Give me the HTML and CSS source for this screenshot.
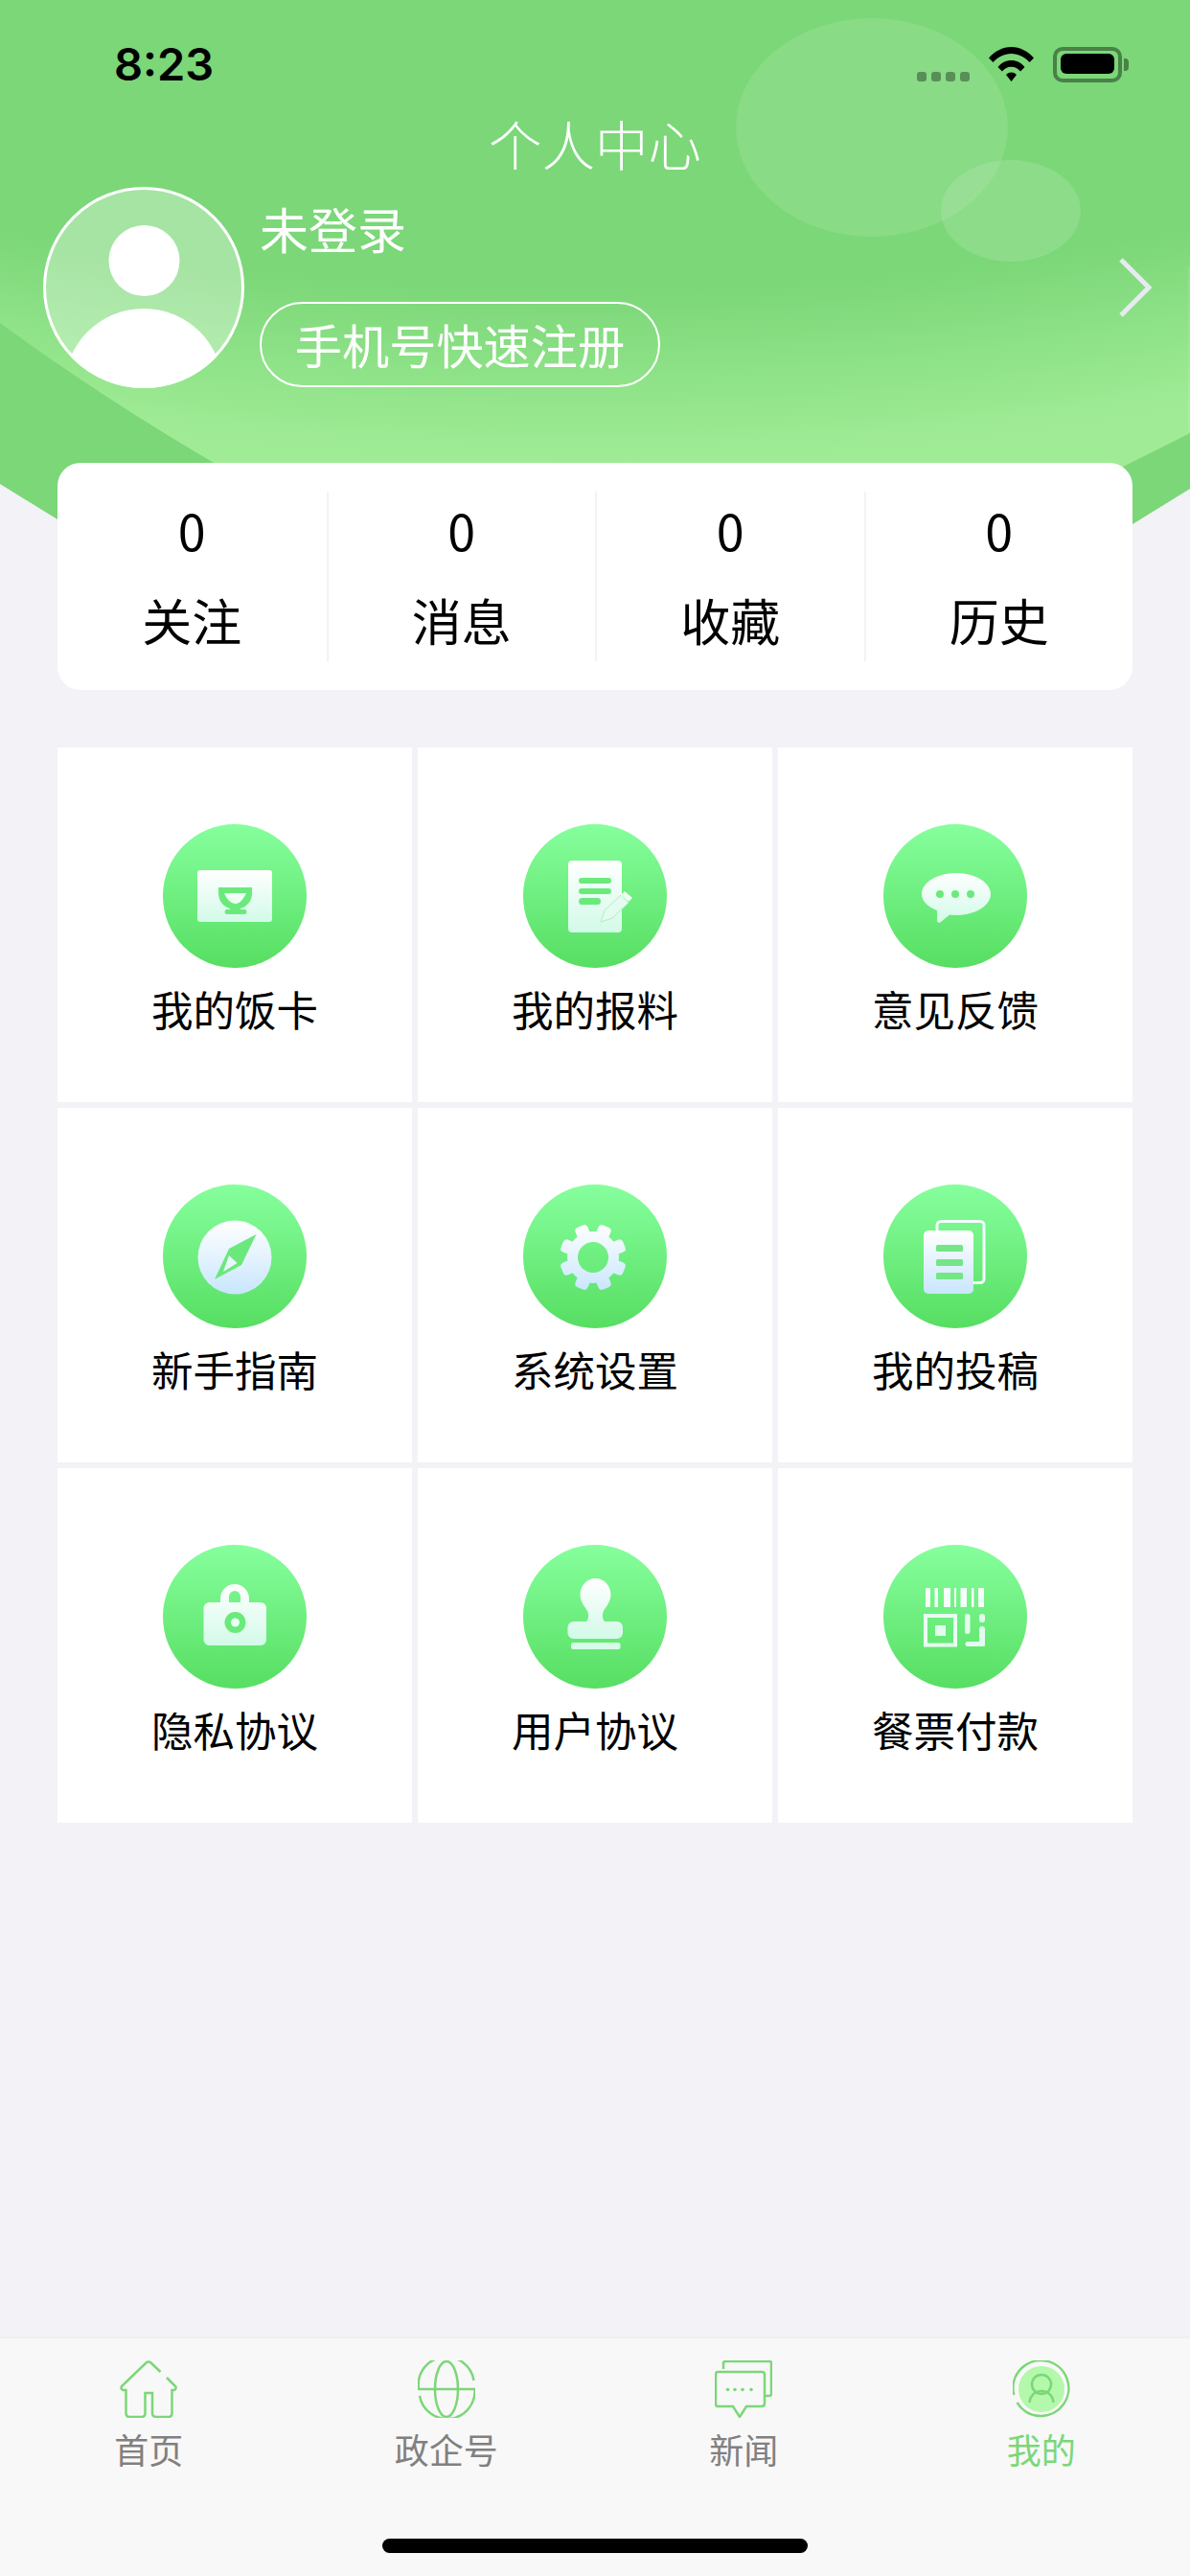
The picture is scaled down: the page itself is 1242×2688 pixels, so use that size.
FILE: index.html
```html
<!DOCTYPE html>
<html lang="zh-CN">
<head>
<meta charset="utf-8">
<title>个人中心</title>
<link rel="stylesheet" href="styles.css">
</head>
<body>
<div class="page">
  <svg class="defs" width="0" height="0" aria-hidden="true">
    <defs>
      <linearGradient id="disc" x1="0" y1="0" x2="0" y2="1"><stop offset="0" stop-color="#86FF9D"/><stop offset="1" stop-color="#57DE62"/></linearGradient>
      <linearGradient id="mint" x1="0" y1="0" x2="0" y2="1"><stop offset="0" stop-color="#FFFFFF"/><stop offset="1" stop-color="#D2FAE8"/></linearGradient>
      <linearGradient id="sky" x1="0" y1="0" x2="0" y2="1"><stop offset="0" stop-color="#FFFFFF"/><stop offset="1" stop-color="#C8E6FD"/></linearGradient>
    </defs>
  </svg>

  <svg class="hero-bg" viewBox="0 0 1242 560" width="1242" height="560" aria-hidden="true">
    <defs>
      <radialGradient id="glow" gradientUnits="userSpaceOnUse" cx="621" cy="-2800" r="3283">
        <stop offset="0.944" stop-color="#A0EC96" stop-opacity="0"/>
        <stop offset="1" stop-color="#A0EC96"/>
      </radialGradient>
    </defs>
    <path fill="#7BD778" d="M0 0H1242V510L1182 547Q621 800 60 542L0 505Z"/>
    <path fill="url(#glow)" d="M0 0H1242V452L1172 487H230Q105 414 0 337Z"/>
    <ellipse cx="910" cy="133" rx="142" ry="114" fill="#fff" fill-opacity=".11"/>
    <ellipse cx="1055" cy="220" rx="73" ry="53" fill="#fff" fill-opacity=".13"/>
    <rect x="1240" y="278" width="2" height="172" fill="#fff" fill-opacity=".1"/>
  </svg>

  <header class="hero">
    <div class="statusbar">
      <span class="time">8:23</span>
      <div class="status-icons">
        <span class="signal"><i></i><i></i><i></i><i></i></span>
        <svg class="wifi" viewBox="0 0 47 36" width="47" height="36">
          <path d="M0 11.5C6 4.5 14.5 0 23.5 0S41 4.500 47 11.500L42.500 16C37.500 10.500 31 7 23.500 7S9.500 10.500 4.500 16Z"/>
          <path d="M9.500 21C13 16.500 18 14 23.500 14S34 16.500 37.500 21L33 25.500C30.500 22.500 27.500 20.800 23.500 20.800S16.500 22.500 14 25.500Z"/>
          <path d="M18 29C19.500 27.300 21.500 26.500 23.500 26.500S27.500 27.300 29 29L23.500 36Z"/>
        </svg>
        <span class="battery"><span class="battery-fill"></span></span>
      </div>
    </div>
    <h1 class="title">个人中心</h1>
    <div class="profile">
      <svg class="avatar" viewBox="0 0 210 210" width="210" height="210">
        <defs><clipPath id="avatar-clip"><circle cx="105" cy="105" r="105"/></clipPath></defs>
        <circle cx="105" cy="105" r="103.500" fill="#fff" fill-opacity=".32" stroke="#fff" stroke-width="3"/>
        <circle cx="105.500" cy="77" r="37" fill="#fff"/>
        <circle cx="105" cy="210" r="83" fill="#fff" clip-path="url(#avatar-clip)"/>
      </svg>
      <div class="profile-text">
        <div class="name">未登录</div>
        <div class="register">手机号快速注册</div>
      </div>
      <svg class="chevron" viewBox="0 0 36 62" width="36" height="62"><path d="M4 2L33 31L4 60" fill="none" stroke="#E6EBF0" stroke-width="5"/></svg>
    </div>
  </header>

  <section class="stats">
    <div class="stat"><span class="stat-num">0</span><span class="stat-label">关注</span></div>
    <div class="stat"><span class="stat-num">0</span><span class="stat-label">消息</span></div>
    <div class="stat"><span class="stat-num">0</span><span class="stat-label">收藏</span></div>
    <div class="stat"><span class="stat-num">0</span><span class="stat-label">历史</span></div>
  </section>

  <section class="menu">
    <div class="cell">
      <svg class="disc" viewBox="0 0 150 150" width="150" height="150">
        <circle cx="75" cy="75" r="75" fill="url(#disc)"/>
        <rect x="36" y="48" width="78" height="54" rx="3" fill="url(#mint)"/>
        <path fill="#6BEA7C" d="M58 66H93V72C93 80 88 86 81 88V89H85A2.500 2.500 0 0 1 85 94H67A2.500 2.500 0 0 1 67 89H70V88C63 86 58 80 58 72Z"/>
        <path fill="#EFFFF6" d="M64 72H87Q82 83 75.500 83Q69 83 64 72Z"/>
      </svg>
      <span class="cell-label">我的饭卡</span>
    </div>
    <div class="cell">
      <svg class="disc" viewBox="0 0 150 150" width="150" height="150">
        <circle cx="75" cy="75" r="75" fill="url(#disc)"/>
        <rect x="47" y="38" width="56" height="75" rx="4" fill="url(#mint)"/>
        <rect x="58" y="56" width="34" height="6" rx="3" fill="#6BEA7C"/>
        <rect x="58" y="67" width="34" height="6" rx="3" fill="#6BEA7C"/>
        <rect x="58" y="77" width="23" height="7" rx="3.500" fill="#6BEA7C"/>
        <path fill="#E4FCEF" stroke="#A9F2BE" stroke-width="1" d="M81 102L85 90L102 74L110 82L93 98Z"/>
        <path fill="#F0FFF6" d="M106 70L114 77L110 81L102 74Z"/>
      </svg>
      <span class="cell-label">我的报料</span>
    </div>
    <div class="cell">
      <svg class="disc" viewBox="0 0 150 150" width="150" height="150">
        <circle cx="75" cy="75" r="75" fill="url(#disc)"/>
        <path fill="url(#mint)" d="M76 51C96 51 112 61 112 73S96 95 76 95C73 95 71 95 69 94.500L60 102Q56 104.500 56 100V90C46 86 40 80 40 73C40 61 56 51 76 51Z"/>
        <circle cx="59" cy="73" r="4" fill="#6BEA7C"/>
        <circle cx="75" cy="73" r="4" fill="#6BEA7C"/>
        <circle cx="91" cy="73" r="4" fill="#6BEA7C"/>
      </svg>
      <span class="cell-label">意见反馈</span>
    </div>
    <div class="cell">
      <svg class="disc" viewBox="0 0 150 150" width="150" height="150">
        <circle cx="75" cy="75" r="75" fill="url(#disc)"/>
        <circle cx="75" cy="76" r="38.500" fill="url(#sky)"/>
        <path fill="#6BE87C" d="M97.500 52L82 84L54 99L69 67Z"/>
        <path fill="#EAF6FE" d="M69 74L77.500 82L63 91Z"/>
      </svg>
      <span class="cell-label">新手指南</span>
    </div>
    <div class="cell">
      <svg class="disc" viewBox="0 0 150 150" width="150" height="150">
        <defs>
          <mask id="gear-mask">
            <circle cx="73" cy="76" r="27" fill="#fff"/>
            <g fill="#fff">
              <rect x="66" y="41" width="14" height="70" rx="4" transform="rotate(22.500 73 76)"/>
              <rect x="66" y="41" width="14" height="70" rx="4" transform="rotate(67.500 73 76)"/>
              <rect x="66" y="41" width="14" height="70" rx="4" transform="rotate(112.500 73 76)"/>
              <rect x="66" y="41" width="14" height="70" rx="4" transform="rotate(157.500 73 76)"/>
            </g>
            <circle cx="73" cy="76" r="16" fill="#000"/>
          </mask>
        </defs>
        <circle cx="75" cy="75" r="75" fill="url(#disc)"/>
        <rect x="36" y="40" width="74" height="72" fill="url(#sky)" mask="url(#gear-mask)"/>
      </svg>
      <span class="cell-label">系统设置</span>
    </div>
    <div class="cell">
      <svg class="disc" viewBox="0 0 150 150" width="150" height="150">
        <circle cx="75" cy="75" r="75" fill="url(#disc)"/>
        <rect x="56" y="38.500" width="49" height="64" rx="4" fill="none" stroke="#F2FBFF" stroke-width="3"/>
        <rect x="42" y="48" width="52" height="66" rx="5" fill="url(#sky)"/>
        <rect x="55" y="63" width="28" height="7" rx="1.500" fill="#74E685"/>
        <rect x="55" y="78" width="28" height="7" rx="1.500" fill="#74E685"/>
        <rect x="55" y="92" width="28" height="7" rx="1.500" fill="#74E685"/>
      </svg>
      <span class="cell-label">我的投稿</span>
    </div>
    <div class="cell">
      <svg class="disc" viewBox="0 0 150 150" width="150" height="150">
        <circle cx="75" cy="75" r="75" fill="url(#disc)"/>
        <path fill="url(#mint)" fill-rule="evenodd" d="M60 60V56A15 15 0 0 1 90 56V60H102A6 6 0 0 1 108 66V99A6 6 0 0 1 102 105H48.500A6 6 0 0 1 42.500 99V66A6 6 0 0 1 48.500 60ZM69 60H81V54A6 6 0 0 0 69 54Z"/>
        <circle cx="75.500" cy="81" r="11" fill="#6BEA7C"/>
        <circle cx="75.500" cy="81" r="4.500" fill="#EAFFF4"/>
      </svg>
      <span class="cell-label">隐私协议</span>
    </div>
    <div class="cell">
      <svg class="disc" viewBox="0 0 150 150" width="150" height="150">
        <circle cx="75" cy="75" r="75" fill="url(#disc)"/>
        <path fill="url(#mint)" d="M75.500 35C85 35 91.500 43 91.500 52C91.500 60 86 65 84 69C82 73 83 78 85 80H98A6 6 0 0 1 104 86V92A6 6 0 0 1 98 98H52.500A6 6 0 0 1 46.500 92V86A6 6 0 0 1 52.500 80H66C68 78 69 73 67 69C65 65 59.500 60 59.500 52C59.500 43 66 35 75.500 35Z"/>
        <rect x="50" y="102" width="51.500" height="7" rx="2" fill="#D8FBEA"/>
      </svg>
      <span class="cell-label">用户协议</span>
    </div>
    <div class="cell">
      <svg class="disc" viewBox="0 0 150 150" width="150" height="150">
        <circle cx="75" cy="75" r="75" fill="url(#disc)"/>
        <g fill="#F4FFF9">
          <rect x="44" y="45" width="5" height="20"/>
          <rect x="53.500" y="45" width="3.500" height="20"/>
          <rect x="63" y="45" width="7" height="20"/>
          <rect x="74" y="45" width="2" height="20"/>
          <rect x="80.500" y="45" width="6.500" height="20"/>
          <rect x="92" y="45" width="2.500" height="20"/>
          <rect x="99" y="45" width="6" height="20"/>
        </g>
        <rect x="44" y="74" width="31" height="30.500" fill="none" stroke="#E6FDF1" stroke-width="4"/>
        <g fill="#E2FCEF">
          <rect x="54" y="84" width="11" height="11"/>
          <rect x="85" y="72" width="5.500" height="21" rx="2.700"/>
          <rect x="100" y="72" width="6" height="9" rx="3"/>
          <path d="M100 88A3 3 0 0 1 106 88V104.500Q106 106 104.500 106H88A2.500 2.500 0 0 1 88 101H100Z"/>
        </g>
      </svg>
      <span class="cell-label">餐票付款</span>
    </div>
  </section>

  <nav class="tabbar">
    <div class="tabs">
      <div class="tab">
        <svg class="tab-icon" viewBox="0 0 60 60" width="60" height="60"><path d="M42.500 12L32 2Q30 .8 28 2L2 27Q.6 29.500 3 31H6.500V55Q6.500 59 10 59H23Q26.500 59 26.500 55V34H34V55Q34 59 38 59H51Q54.500 59 54.500 55V31H57Q59.500 29.500 58 27L49 18"/></svg>
        <span class="tab-label">首页</span>
      </div>
      <div class="tab">
        <svg class="tab-icon" viewBox="0 0 60 60" width="60" height="60"><path d="M58.500 21A29 29 0 0 0 1 30H59.500A29 29 0 0 1 2 37"/><ellipse cx="30" cy="30" rx="12" ry="29"/></svg>
        <span class="tab-label">政企号</span>
      </div>
      <div class="tab">
        <svg class="tab-icon" viewBox="0 0 60 60" width="60" height="60">
          <path d="M9 9V3Q9 1 11 1H57Q59 1 59 3V35Q59 37 57 37H53"/>
          <path d="M3 12H49Q52 12 52 15V45Q52 48 49 48H33L26 59L19 48H3Q1 48 1 45V15Q1 12 3 12Z"/>
          <g class="tab-dots"><circle cx="13.500" cy="30.500" r="1.800"/><circle cx="21" cy="30.500" r="1.800"/><circle cx="29" cy="30.500" r="1.800"/><circle cx="38" cy="30.500" r="1.800"/></g>
        </svg>
        <span class="tab-label">新闻</span>
      </div>
      <div class="tab tab-active">
        <svg class="tab-icon" viewBox="0 0 60 60" width="60" height="60">
          <circle class="tab-me-fill" cx="30" cy="30" r="24"/>
          <path d="M1.200 36A29 29 0 1 1 4.500 44"/>
          <circle cx="30" cy="25" r="10"/>
          <path d="M17.500 44C18 37 23 32 30 32S42 37 42.500 44"/>
        </svg>
        <span class="tab-label">我的</span>
      </div>
    </div>
    <div class="home-indicator"></div>
  </nav>
</div>
</body>
</html>
```

FILE: styles.css
```css
* { box-sizing: border-box; }

html, body { margin: 0; padding: 0; }

body {
  font-family: "Noto Sans CJK SC", "Noto Sans", sans-serif;
  background: #F2F2F7;
}

.page {
  position: relative;
  width: 1242px;
  height: 2688px;
  display: flex;
  flex-direction: column;
  overflow: hidden;
  background: #F2F2F7;
}

.defs { position: absolute; }

.hero-bg {
  position: absolute;
  top: 0;
  left: 0;
}

.hero {
  position: relative;
  height: 483px;
  color: #fff;
}

/* status bar */
.statusbar {
  height: 122px;
  padding: 0 71px 0 119px;
  display: flex;
  justify-content: space-between;
  align-items: flex-start;
}

.time {
  margin-top: 38px;
  font-family: Inter, "Liberation Sans", sans-serif;
  font-size: 47px;
  line-height: 58px;
  font-weight: 600;
  color: #000;
}

.status-icons {
  margin-top: 49px;
  display: flex;
  align-items: flex-start;
}

.signal {
  margin-top: 26px;
  display: flex;
  gap: 5px;
}

.signal i {
  width: 10px;
  height: 10px;
  border-radius: 3px;
  background: rgba(0, 0, 0, .35);
}

.wifi { margin-left: 20px; }

.battery {
  position: relative;
  margin-left: 20px;
  width: 72px;
  height: 37px;
  padding: 4px;
  border: 4px solid rgba(0, 0, 0, .4);
  border-radius: 10px;
}

.battery::after {
  content: "";
  position: absolute;
  top: 8px;
  right: -11px;
  width: 5px;
  height: 13px;
  border-radius: 0 4px 4px 0;
  background: rgba(0, 0, 0, .4);
}

.battery-fill {
  display: block;
  width: 100%;
  height: 100%;
  margin: -1px 0 0;
  border-radius: 6px;
  background: #000;
}

.title {
  margin: 0;
  text-align: center;
  font-size: 55.500px;
  line-height: 54px;
  font-weight: 300;
}

/* profile row */
.profile {
  margin-top: 19px;
  padding: 0 40px 0 45px;
  display: flex;
  align-items: center;
}

.avatar { flex: none; }

.profile-text {
  margin-left: 16px;
  height: 210px;
  display: flex;
  flex-direction: column;
  align-items: flex-start;
}

.name {
  margin-top: 13px;
  font-size: 51px;
  line-height: 60px;
  font-weight: 400;
}

.register {
  margin-top: 47px;
  height: 89px;
  width: 418px;
  border: 2px solid #fff;
  border-radius: 45px;
  text-align: center;
  font-size: 49.200px;
  line-height: 83px;
  font-weight: 400;
  white-space: nowrap;
}

.chevron { margin-left: auto; }

/* stats */
.stats {
  position: relative;
  margin: 0 60px;
  height: 237px;
  padding: 30px 0 30px;
  display: grid;
  grid-template-columns: repeat(4, 1fr);
  background: #fff;
  border-radius: 24px;
}

.stat {
  display: flex;
  flex-direction: column;
  align-items: center;
  color: #000;
  border-left: 2px solid #F2F2F7;
}

.stat:first-child { border-left: 0; }

.stat-num {
  margin-top: 12px;
  font-size: 52px;
  line-height: 56px;
  font-weight: 400;
}

.stat-label {
  margin-top: 36px;
  font-size: 52px;
  line-height: 60px;
  font-weight: 400;
}

/* menu grid */
.menu {
  margin: 60px 60px 0;
  display: grid;
  grid-template-columns: repeat(3, 370px);
  grid-auto-rows: 370px;
  gap: 6px;
}

.cell {
  padding-top: 80px;
  display: flex;
  flex-direction: column;
  align-items: center;
  background: #fff;
}

.disc { flex: none; }

.cell-label {
  margin-top: 17px;
  font-size: 43.500px;
  line-height: 52px;
  color: #000;
}

/* tab bar */
.tabbar {
  margin-top: auto;
  height: 250px;
  padding-top: 23px;
  display: flex;
  flex-direction: column;
  align-items: center;
  background: #F8F8F8;
  border-top: 2px solid #EFEFF2;
}

.tabs {
  width: 100%;
  display: grid;
  grid-template-columns: repeat(4, 1fr);
}

.tab {
  display: flex;
  flex-direction: column;
  align-items: center;
}

.tab-icon {
  fill: none;
  stroke: #7BD778;
  stroke-width: 2.500;
}

.tab-dots {
  fill: #7BD778;
  stroke: none;
}

.tab-me-fill {
  fill: #B4F8AB;
  stroke: none;
}

.tab-label {
  margin-top: 12px;
  font-size: 36px;
  line-height: 40px;
  color: #808080;
}

.tab-active .tab-label { color: #7BD778; }

.home-indicator {
  margin-top: 74px;
  width: 444px;
  height: 15px;
  border-radius: 8px;
  background: #000;
}
```
